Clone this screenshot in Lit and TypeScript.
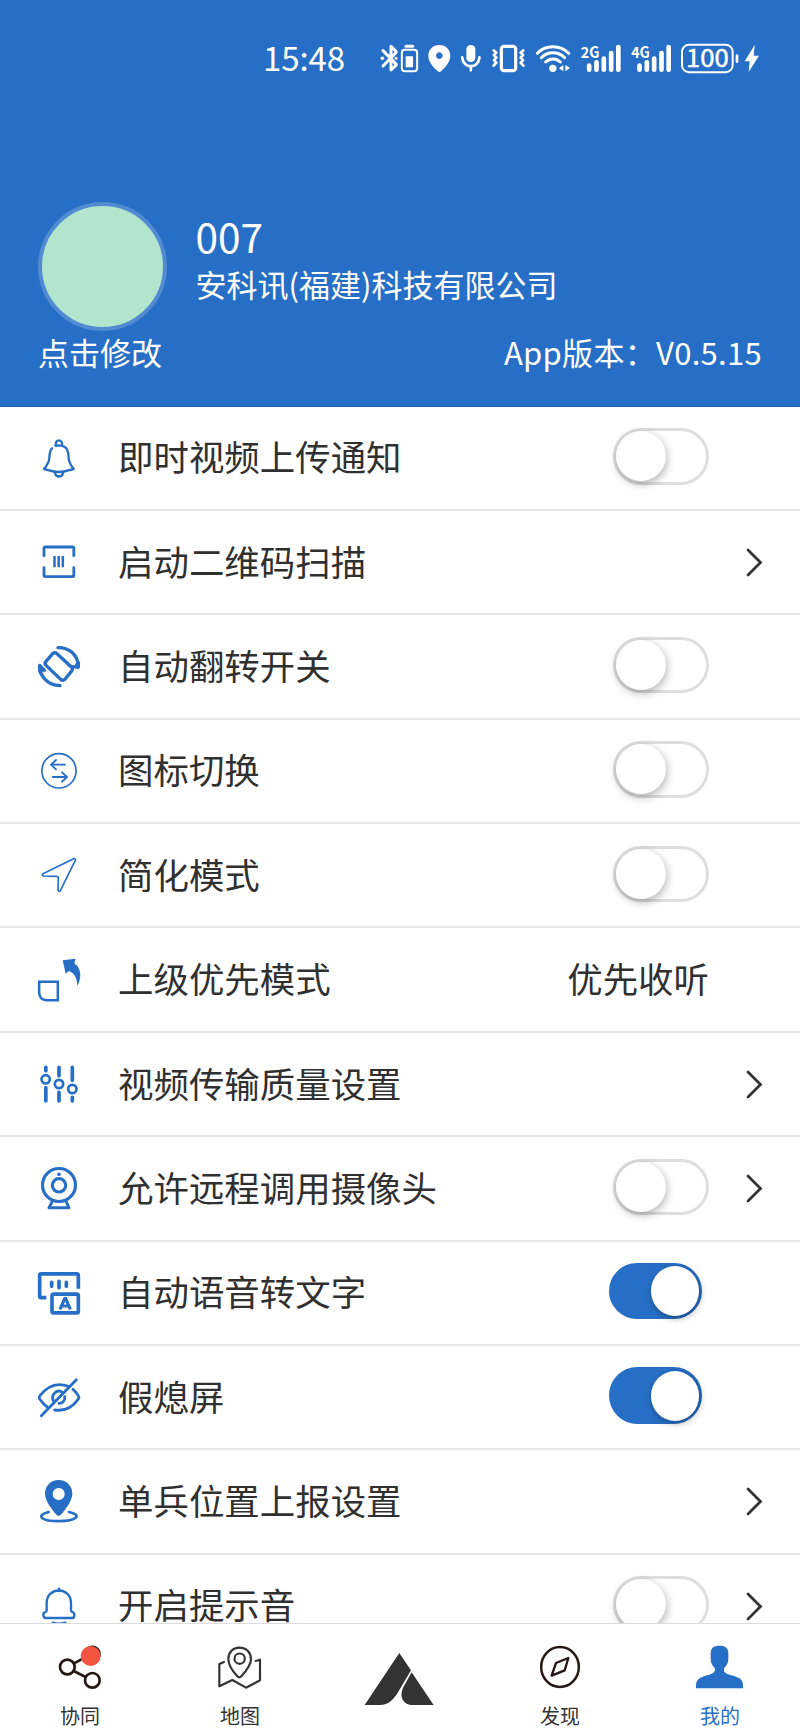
import { LitElement, html, svg, css, nothing } from "lit";
import { customElement, property } from "lit/decorators.js";

type Row = {
  icon: string;
  label: string;
  toggle?: "on" | "off";
  value?: string;
  arrow?: boolean;
};

const ROWS: Row[] = [
  { icon: "bell", label: "即时视频上传通知", toggle: "off" },
  { icon: "scan", label: "启动二维码扫描", arrow: true },
  { icon: "rotate", label: "自动翻转开关", toggle: "off" },
  { icon: "swap", label: "图标切换", toggle: "off" },
  { icon: "plane", label: "简化模式", toggle: "off" },
  { icon: "priority", label: "上级优先模式", value: "优先收听" },
  { icon: "sliders", label: "视频传输质量设置", arrow: true },
  { icon: "camera", label: "允许远程调用摄像头", toggle: "off", arrow: true },
  { icon: "speech", label: "自动语音转文字", toggle: "on" },
  { icon: "eye", label: "假熄屏", toggle: "on" },
  { icon: "location", label: "单兵位置上报设置", arrow: true },
  { icon: "ring", label: "开启提示音", toggle: "off", arrow: true },
];

const ICONS: Record<string, { box: string; art: unknown }> = {
  bell: {
    box: "102 67 150 150",
    art: svg`<g stroke-width="7">
      <path d="M168 104 C163 84 190 84 186 104"/>
      <path d="M156 113 C149 119 149 128 148 142 C147 158 139 166 132 175 C145 177 153 184 177 184 C200 184 208 177 221 175 C214 166 207 158 206 142 C205 116 199 106 178 104 L166 105"/>
      <path d="M165 187 C168 201 186 201 189 187"/></g>`,
  },
  scan: {
    box: "102 381 150 150",
    art: svg`<g stroke-width="8.500">
      <path d="M132 437 V415 Q132 411 136 411 H218 Q221.500 411 221.500 415 V437"/>
      <path d="M132 473 V496 Q132 500 136 500 H218 Q221.500 500 221.500 496 V473"/></g>
      <path stroke-width="7.500" stroke-linecap="butt" d="M163.500 438 V472 M176 438 V472 M188.500 438 V472"/>`,
  },
  rotate: {
    box: "102 694 150 150",
    art: svg`<g stroke-width="10">
      <path d="M158 729 Q165 724 171 729 L215 770 Q220 776 215 781 L195 806 Q189 811 182 806 L139 765 Q132 758 138 752 Z"/>
      <path d="M174 711 C211 711 234 735 235 768"/>
      <path d="M180 825 C143 824 120 797 119 767"/></g>
      <path class="solid" d="M240 753 V770 Q238 777 231 775 L207 769 Q201 764 209 762 L224 764 L232 750Z M114 782 V764 Q117 757 123 761 L138 777 Q140 783 133 783 L124 783 L121 795Z"/>`,
  },
  swap: {
    box: "102 77 150 150",
    art: svg`<circle cx="177" cy="151.500" r="51.500" stroke-width="5"/>
      <path stroke-width="5.500" d="M195 133 H153 M168 119 L153 133 L168 147 M158 170 H201 M186 156 L201 170 L186 184"/>`,
  },
  plane: {
    box: "102 390 150 150",
    art: svg`<path stroke-width="5" d="M129 461 L221 416 Q227 414 226 421 L181 512 Q177 517 174 511 L175 474 Q175 469 170 469 L130 468 Q125 465 129 461Z"/>`,
  },
  priority: {
    box: "102 703 150 150",
    art: svg`<path stroke-width="7.500" stroke-linejoin="miter" d="M117.500 783.500 H173.500 V838.500 H140 Q118 837 117.500 816Z"/>
      <path class="solid" d="M188 719 L227 714 L223 728 C241 739 248 769 232 796 C232 774 224 758 207 751 L197 759Z"/>`,
  },
  sliders: {
    box: "102 86 150 150",
    art: svg`<g stroke-width="11"><path d="M137.500 111 V121 M137.500 172 V212 M177 111 V136 M177 186 V212 M217 111 V150 M217 201 V212"/></g>
      <g stroke-width="8"><circle cx="137" cy="147" r="12.500"/><circle cx="177" cy="161" r="12.500"/><circle cx="217" cy="176" r="12.500"/></g>`,
  },
  camera: {
    box: "102 399 150 150",
    art: svg`<circle cx="177" cy="465" r="49.500" stroke-width="9.500"/><circle cx="177" cy="466" r="20" stroke-width="9.500"/>
      <circle class="solid" cx="177" cy="433" r="5.500"/>
      <path stroke-width="9" d="M157 514 L147 533 H207 L198 514"/>`,
  },
  speech: {
    box: "102 712 150 150",
    art: svg`<g stroke-width="11"><path stroke-linecap="butt" d="M139 801 H123 Q119 801 119 796 V734 Q119 729.500 124 729.500 H230 Q235 729.500 235 735 V774"/>
      <rect x="156" y="790.500" width="79" height="56" rx="5"/>
      <path d="M155 755 V767 M177 752 V771 M199 755 V767"/></g>
      <path stroke-width="9.500" stroke-linecap="butt" stroke-linejoin="miter" d="M180 836 L194 804 H197 L211 836 M185 826 H207"/>`,
  },
  eye: {
    box: "102 95 150 150",
    art: svg`<g stroke-width="8.500">
      <path d="M207 139 C168 123 140 140 119 167 Q116 171 119 176 C126 186 132 193 142 200"/>
      <path d="M219 147 C226 154 232 161 236 168 Q238 172 235 176 C218 201 192 213 164 209"/>
      <path d="M229 118 L124 226"/><path d="M160 181 C152 162 172 145 187 156 M194 169 C197 180 187 190 177 189"/></g>`,
  },
  location: {
    box: "102 409 150 150",
    art: svg`<path class="solid" fill-rule="evenodd" d="M176 421 C200 421 217 439 217 462 C217 484 196 509 184 524 Q176 533 168 524 C156 509 135 484 135 462 C135 439 152 421 176 421Z M176 445 a18 18 0 1 0 .1 0Z"/>
      <path stroke-width="8" d="M146 517 C104 528 125 544.500 177 544.500 C228 544.500 250 527 207 517"/>`,
  },
  ring: {
    box: "102 722 150 150",
    art: svg`<g stroke-width="7"><path d="M177 745 V752"/>
      <path d="M140 811 V788 C140 738 213 738 213 788 V811 Q215 815 221 817 Q226 825 220 833 H134 Q127 825 132 817 Q139 815 140 811Z"/>
      <path d="M158 847 Q177 853 196 847"/></g>`,
  },
};

@customElement("setting-switch")
class SettingSwitch extends LitElement {
  @property({ type: Boolean, reflect: true }) on = false;

  static styles = css`
    :host { display: block; margin-bottom: 3px; }
    .track {
      display: flex; align-items: center; box-sizing: border-box;
      width: 96.5px; height: 56.5px; border: 3px solid #dedede; border-radius: 29px;
      background: #fff;
    }
    .knob {
      width: 50px; height: 50px; border-radius: 50%; background: #fff;
      box-shadow: 1px 3px 8px rgba(0, 0, 0, 0.3);
    }
    :host([on]) .track {
      width: 93px; margin-right: 7px; justify-content: flex-end;
      border-color: #276fc6; background: #276fc6;
    }
    :host([on]) .knob { width: 48.500px; box-shadow: 1px 2px 7px rgba(0, 0, 0, 0.36); }
  `;

  render() {
    return html`<div class="track"><div class="knob"></div></div>`;
  }
}

@customElement("setting-row")
class SettingRow extends LitElement {
  @property({ attribute: false }) row!: Row;

  static styles = css`
    :host {
      display: grid; grid-template-columns: 84px 1fr auto 91px; align-items: center;
      box-sizing: border-box; height: 104.370px; flex: none; padding-left: 34px;
      border-bottom: 2px solid #e6e6e6; background: #fff;
      font-size: 35.450px; line-height: 50px; color: #303030; white-space: nowrap;
    }
    .text { padding-bottom: 3px; }
    .icon {
      width: 50px; height: 50px; fill: none; stroke: #276fc6;
      stroke-linecap: round; stroke-linejoin: round;
    }
    .solid { fill: #276fc6; stroke: none; }
    .arrow { display: block; width: 20px; height: 32px; margin-left: 36px; fill: none; stroke: #333; stroke-width: 2.800; stroke-linecap: round; }
  `;

  render() {
    const { icon, label, toggle, value, arrow } = this.row;
    return html`
      <svg class="icon" viewBox=${ICONS[icon].box}>${ICONS[icon].art}</svg>
      <span class="text">${label}</span>
      ${toggle
        ? html`<setting-switch ?on=${toggle === "on"}></setting-switch>`
        : html`<span class="text">${value ?? ""}</span>`}
      ${arrow
        ? html`<svg class="arrow" viewBox="0 0 20 32"><path d="M3 4 L15.500 16.500 L3 29"/></svg>`
        : nothing}
    `;
  }
}

@customElement("status-bar")
class StatusBar extends LitElement {
  static styles = css`
    :host { display: flex; height: 40px; padding: 40px 0 0 263px; color: #fff; }
    .time { width: 115px; font-size: 33px; line-height: 35px; letter-spacing: -0.1px; }
    svg { display: block; height: 40px; flex: none; fill: none; stroke: #fff; stroke-linecap: round; stroke-linejoin: round; }
    .f { fill: #fff; stroke: none; }
    .gen { fill: #fff; stroke: none; font: 700 46px "Noto Sans CJK SC", sans-serif; }
    .level { fill: #fff; stroke: #fff; stroke-width: 1.500px; font: 400 73px "Noto Sans CJK SC", sans-serif; }
  `;

  private glyph(from: number, to: number, art: unknown) {
    return html`<svg width=${(to - from) / 3} viewBox="${from} 30 ${to - from} 120">${art}</svg>`;
  }

  private signal(x: number, label: string) {
    return svg`<text class="gen" x=${x - 25} y="84" textLength="56" lengthAdjust="spacingAndGlyphs">${label}</text>
      <path stroke-width="14" d="M${x} 107 V119 M${x + 22} 97 V119 M${x + 44} 86 V119 M${x + 66} 69 V119 M${x + 87.5} 51 V119"/>`;
  }

  render() {
    return html`
      <span class="time">15:48</span>
      ${this.glyph(384, 447, svg`<path stroke-width="9" d="M399 62 L437 101 Q440 104 437 107 L423 120 V49 L437 63 Q440 66 437 69 L399 108"/><circle class="f" cx="397" cy="85" r="5.500"/><circle class="f" cx="438" cy="85" r="4.500"/>`)}
      ${this.glyph(447, 519, svg`<path stroke-width="9" d="M468 49 H488"/><rect x="455.500" y="59.500" width="46" height="64" rx="9" stroke-width="6"/><rect class="f" x="467" y="79" width="22" height="33" rx="2"/>`)}
      ${this.glyph(519, 616, svg`<path class="f" fill-rule="evenodd" d="M568 45 C588 45 601 59 601 78 C601 96 585 113 573 124 Q568 128 563 124 C551 113 535 96 535 78 C535 59 548 45 568 45Z M568 67 a10 10 0 1 0 .1 0Z"/>`)}
      ${this.glyph(616, 708, svg`<rect class="f" x="650" y="45" width="27" height="51" rx="13"/><path stroke-width="8" d="M637.500 82 C640 117 687 117 689.500 82 M663.500 110 V121"/>`)}
      ${this.glyph(708, 840, svg`<rect x="754" y="49" width="43" height="73" rx="8" stroke-width="9.500"/><path stroke-width="8" d="M731 61 L739 68 L732 75 L739 83 L732 91 L739 98 L731 107 M820 61 L812 68 L819 75 L812 83 L819 91 L812 98 L820 107"/>`)}
      ${this.glyph(840, 980, svg`<path stroke-width="9" d="M862 70 C886 44 931 44 956 70 M874 83 C893 63 925 63 944 83 M887 96 C900 84 918 84 931 96"/><circle class="f" cx="908.500" cy="115" r="11"/><path class="f" d="M940 105 V124 L927 115Z M946 105 V124 L960 114Z"/>`)}
      ${this.glyph(980, 1130, this.signal(1016.5, "2G"))}
      ${this.glyph(1130, 1282, this.signal(1167.5, "4G"))}
      ${this.glyph(1282, 1475, svg`<rect x="1297" y="44.500" width="152" height="82" rx="21" stroke-width="6"/><text class="level" x="1309" y="112" textLength="128" lengthAdjust="spacingAndGlyphs">100</text><path stroke-width="8" d="M1462 77 V95"/>`)}
      ${this.glyph(1475, 1540, svg`<path class="f" d="M1513 45 Q1514 44 1513 47 L1510 77 H1526 L1495 126 L1498 94 H1483Z"/>`)}
    `;
  }
}

const TABS = [
  {
    label: "协同",
    art: html`<svg viewBox="165 907 150 150"><g fill="none" stroke="#231815" stroke-width="8"><path d="M222 971 L250 956 M221 994 L257 1012"/><circle cx="202" cy="982" r="22"/><circle cx="277" cy="1022" r="22"/><circle cx="277" cy="943" r="21.500"/></g><circle cx="272" cy="949" r="30" fill="#f35541"/></svg>`,
  },
  {
    label: "地图",
    art: html`<svg viewBox="645 907 150 150"><g fill="none" stroke="#333" stroke-width="6.500" stroke-linecap="round" stroke-linejoin="round"><path d="M672 967 L658 973 V1040 L697 1021 L738 1044 L780 1022 V960 L767 964"/><path d="M718 924 C740 924 753 939 753 958 C753 977 735 998 724 1010 Q718 1016 712 1010 C701 998 685 977 685 958 C685 939 698 924 718 924Z"/><circle cx="719" cy="957" r="15.500"/></g></svg>`,
  },
  {
    label: "",
    art: html`<svg class="logo" viewBox="190 306 220 200"><path fill="#333" d="M299 339 L334 391 L296 455 C281 480 266 494 241 495 H195Z M336 397 L402 495 H335 C308 492 297 467 313 438Z"/></svg>`,
  },
  {
    label: "发现",
    art: html`<svg viewBox="705 307 150 150"><g fill="none" stroke="#231815" stroke-width="7.500" stroke-linejoin="round"><ellipse cx="780" cy="382" rx="56.500" ry="60"/><path stroke-width="7" d="M805 355 L768 370 L755 408 L794 392Z"/></g></svg>`,
  },
  {
    label: "我的",
    active: true,
    art: html`<svg viewBox="1185 307 150 150"><path fill="#276fc6" d="M1258 318 C1276 318 1285 325 1285 341 V356 C1285 373 1278 379 1273 385 C1270 395 1274 400 1284 404 C1311 412 1329 414 1329 437 V446 H1188 V437 C1188 414 1209 411 1233 403 C1243 399 1247 394 1244 385 C1238 378 1232 371 1232 356 V341 C1232 325 1241 318 1258 318Z"/></svg>`,
  },
];

@customElement("app-root")
class AppRoot extends LitElement {
  static styles = css`
    :host {
      display: flex; flex-direction: column; width: 800px; height: 1733px; overflow: hidden;
      background: #fff; font-family: "Noto Sans CJK SC", sans-serif;
    }
    .header {
      display: flex; flex-direction: column; box-sizing: border-box; height: 406.700px; flex: none;
      background: #276fc6; color: #fff; border-bottom: 1px solid #2463b4;
    }
    .profile { display: flex; margin: 122px 0 0 38px; }
    .avatar {
      box-sizing: border-box; width: 129px; height: 129px; border-radius: 50%;
      border: 4.500px solid #528bd1; background: #b2e5cd;
    }
    .who { display: flex; flex-direction: column; padding: 9px 0 0 28.500px; }
    .name { font-size: 40.500px; line-height: 50px; }
    .company { font-size: 31px; line-height: 46px; white-space: nowrap; }
    .meta {
      display: flex; justify-content: space-between; padding: 0 38px;
      font-size: 31px; line-height: 41px;
    }
    .version { letter-spacing: 0.3px; }
    .list { display: flex; flex-direction: column; flex: 1; min-height: 0; overflow: hidden; }
    .tabs {
      display: grid; grid-template-columns: repeat(5, 1fr); box-sizing: border-box;
      height: 110px; flex: none; border-top: 1px solid #dcdcdc; background: #fff;
    }
    .tab { display: flex; flex-direction: column; align-items: center; padding-top: 18px; font-size: 20px; line-height: 30px; color: #333; }
    .tab svg { display: block; width: 50px; height: 50px; margin-bottom: 8.500px; flex: none; }
    .tab .logo { width: 73.300px; height: 66.700px; }
    .active { color: #276fc6; }
  `;

  render() {
    return html`
      <div class="header">
        <status-bar></status-bar>
        <div class="profile">
          <div class="avatar"></div>
          <div class="who">
            <span class="name">007</span>
            <span class="company">安科讯(福建)科技有限公司</span>
          </div>
        </div>
        <div class="meta"><span>点击修改</span><span class="version">App版本：V0.5.15</span></div>
      </div>
      <div class="list">${ROWS.map((row) => html`<setting-row .row=${row}></setting-row>`)}</div>
      <div class="tabs">
        ${TABS.map((tab) => html`<div class="tab ${tab.active ? "active" : ""}">${tab.art}<span>${tab.label}</span></div>`)}
      </div>
    `;
  }
}
